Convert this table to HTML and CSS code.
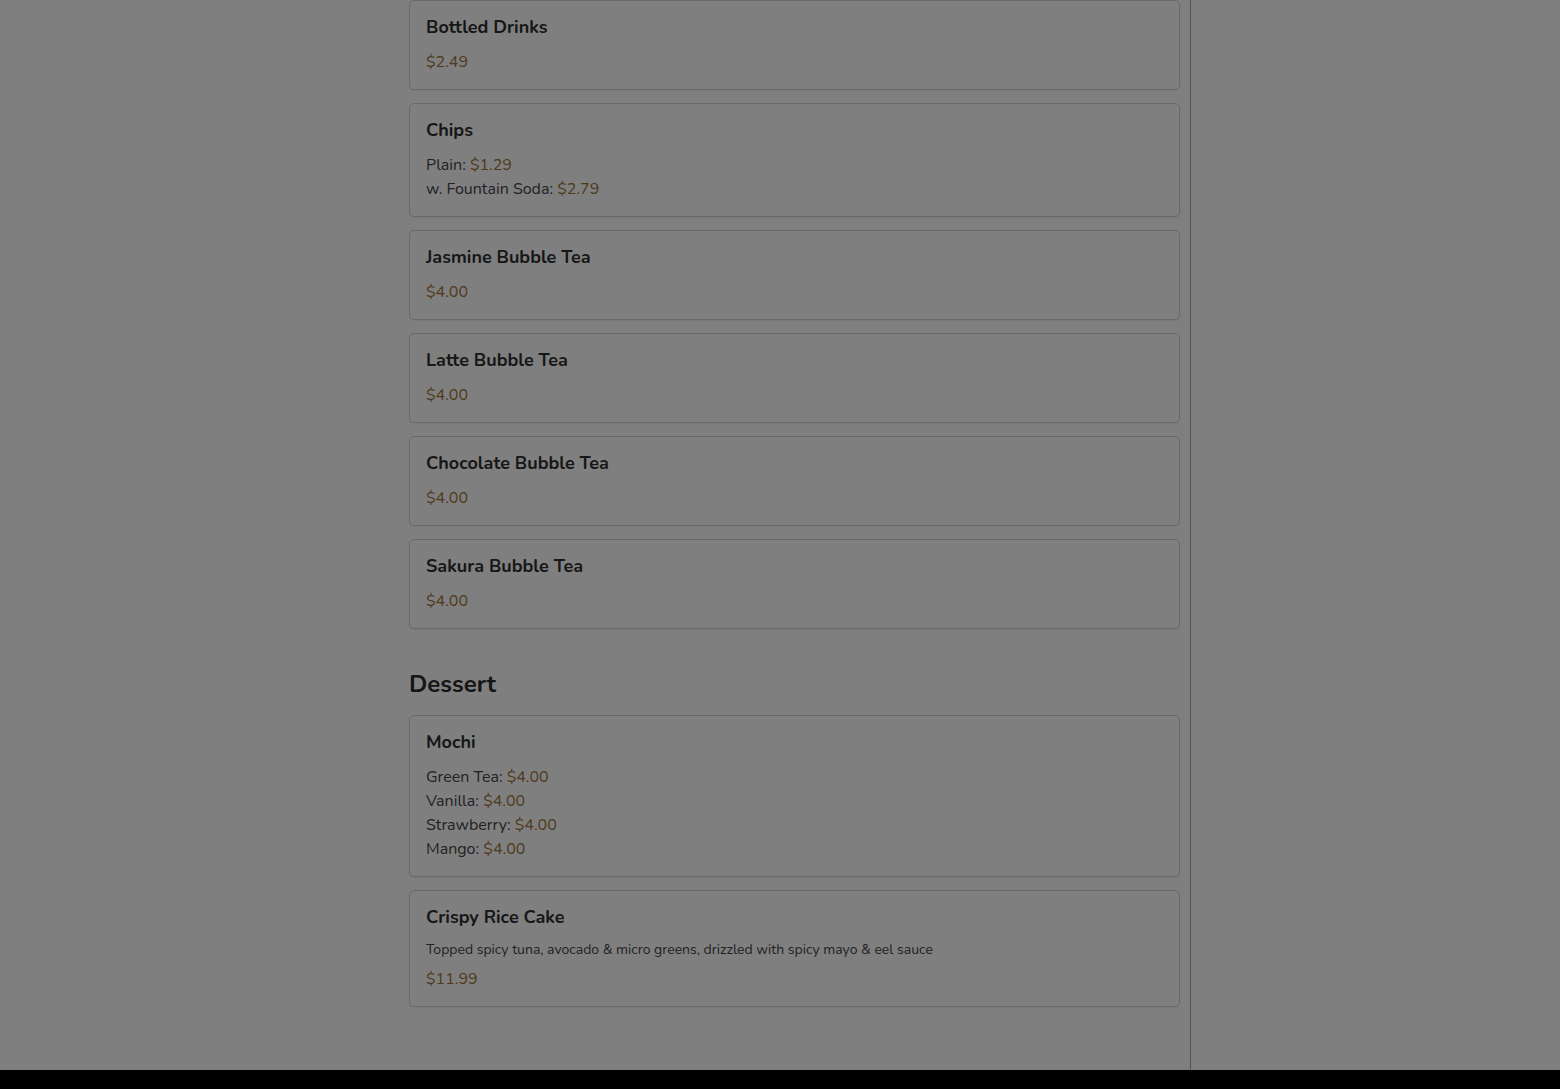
FILE: index.html
```html
<!DOCTYPE html>
<html>
<head>
<meta charset="utf-8">
<link rel="stylesheet" href="styles.css">
</head>
<body>
<div class="page">
  <div class="gutter"></div>
  <main class="menu">
    <section class="section">
      <div class="card">
        <h3 class="item-name">Bottled Drinks</h3>
        <div class="lines"><div class="price">$2.49</div></div>
      </div>
      <div class="card">
        <h3 class="item-name">Chips</h3>
        <div class="lines">
          <div class="line">Plain: <span class="price">$1.29</span></div>
          <div class="line">w. Fountain Soda: <span class="price">$2.79</span></div>
        </div>
      </div>
      <div class="card">
        <h3 class="item-name">Jasmine Bubble Tea</h3>
        <div class="lines"><div class="price">$4.00</div></div>
      </div>
      <div class="card">
        <h3 class="item-name">Latte Bubble Tea</h3>
        <div class="lines"><div class="price">$4.00</div></div>
      </div>
      <div class="card">
        <h3 class="item-name">Chocolate Bubble Tea</h3>
        <div class="lines"><div class="price">$4.00</div></div>
      </div>
      <div class="card">
        <h3 class="item-name">Sakura Bubble Tea</h3>
        <div class="lines"><div class="price">$4.00</div></div>
      </div>
    </section>
    <section class="section">
      <h2 class="section-title">Dessert</h2>
      <div class="card">
        <h3 class="item-name">Mochi</h3>
        <div class="lines">
          <div class="line">Green Tea: <span class="price">$4.00</span></div>
          <div class="line">Vanilla: <span class="price">$4.00</span></div>
          <div class="line">Strawberry: <span class="price">$4.00</span></div>
          <div class="line">Mango: <span class="price">$4.00</span></div>
        </div>
      </div>
      <div class="card">
        <h3 class="item-name">Crispy Rice Cake</h3>
        <p class="desc">Topped spicy tuna, avocado &amp; micro greens, drizzled with spicy mayo &amp; eel sauce</p>
        <div class="price">$11.99</div>
      </div>
    </section>
  </main>
  <div class="rest"></div>
</div>
<footer class="footer"></footer>
<div class="overlay"></div>
</body>
</html>
```

FILE: styles.css
```css
html, body {
  margin: 0;
  padding: 0;
  background: #ffffff;
  overflow: hidden;
}
body {
  font-family: "Nunito", "Lato", "Open Sans", sans-serif;
  color: #333333;
}
.page {
  display: grid;
  grid-template-columns: 409px 782px 1fr;
  min-height: 1070px;
}
.menu {
  border-right: 1px solid #aaaaaa;
  padding-right: 10px;
  padding-bottom: 63px;
}
.section {
  display: flex;
  flex-direction: column;
  gap: 13px;
}
.section + .section {
  margin-top: 39px;
}
.section-title {
  margin: 0 0 2px 0;
  font-size: 24px;
  line-height: 32px;
  font-weight: 700;
  color: #2a2a2a;
}
.card {
  border: 1px solid #d2d2d2;
  border-radius: 5px;
  padding: 16px 16px 15px 16px;
  background: #ffffff;
  box-shadow: 0 1px 2px rgba(0,0,0,0.06);
}
.item-name {
  margin: 0 0 13px 0;
  font-size: 18px;
  line-height: 20px;
  font-weight: 700;
  color: #2e2e2e;
}
.lines {
  font-size: 16px;
  line-height: 24px;
  color: #444444;
}
.price {
  color: #9c7538;
  font-size: 16px;
  line-height: 24px;
}
.desc {
  margin: -1px 0 7px 0;
  font-size: 14px;
  line-height: 21px;
  color: #444444;
}
.footer {
  height: 40px;
  background: #000000;
}
.overlay {
  position: fixed;
  inset: 0;
  background: rgba(0, 0, 0, 0.5);
}
```
